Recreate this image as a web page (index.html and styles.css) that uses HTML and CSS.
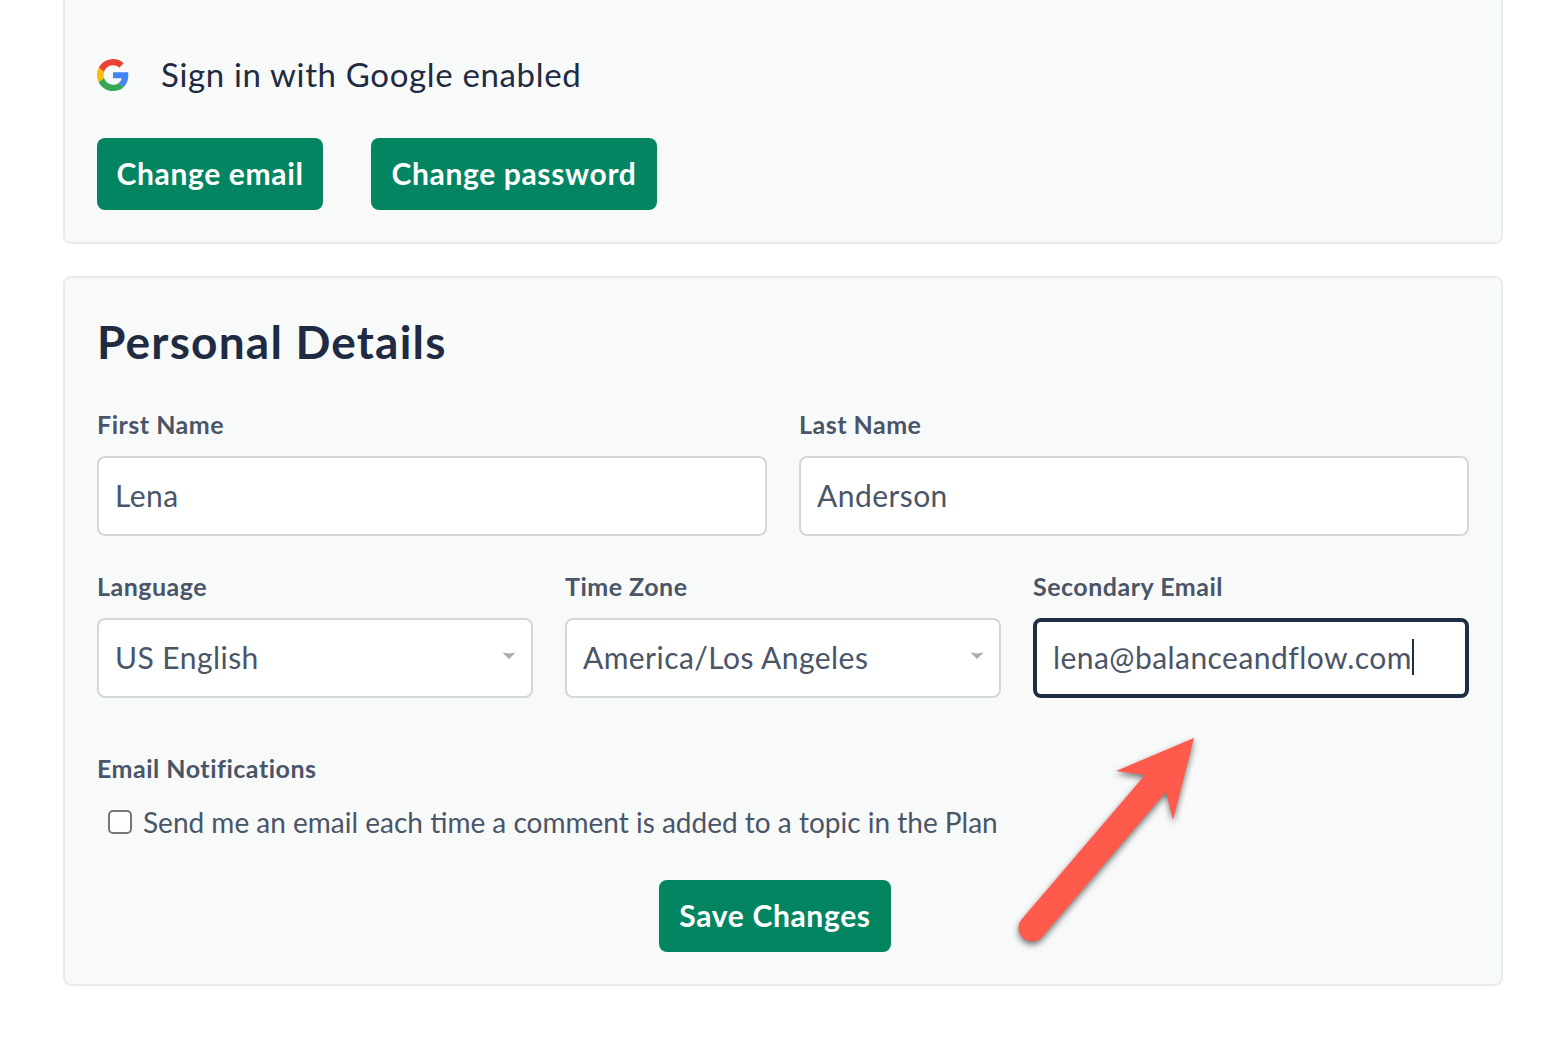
FILE: index.html
```html
<!DOCTYPE html>
<html lang="en">
<head>
<meta charset="utf-8">
<title>Account settings</title>
<link rel="stylesheet" href="styles.css">
</head>
<body>
<main class="page">
  <section class="card card-top">
    <div class="google-row">
      <svg class="google-icon" viewBox="0 0 48 48" aria-hidden="true">
        <path fill="#EA4335" d="M24 9.5c3.54 0 6.71 1.22 9.21 3.6l6.85-6.85C35.9 2.38 30.47 0 24 0 14.62 0 6.51 5.38 2.56 13.22l7.98 6.19C12.43 13.72 17.74 9.5 24 9.5z"/>
        <path fill="#4285F4" d="M46.98 24.55c0-1.57-.15-3.09-.38-4.55H24v9.02h12.94c-.58 2.96-2.26 5.48-4.78 7.18l7.73 6c4.51-4.18 7.09-10.36 7.09-17.65z"/>
        <path fill="#FBBC05" d="M10.53 28.59c-.48-1.45-.76-2.99-.76-4.59s.27-3.14.76-4.59l-7.98-6.19C.92 16.46 0 20.12 0 24c0 3.88.92 7.54 2.56 10.78l7.97-6.19z"/>
        <path fill="#34A853" d="M24 48c6.48 0 11.93-2.13 15.89-5.81l-7.73-6c-2.15 1.45-4.92 2.3-8.16 2.3-6.26 0-11.57-4.22-13.47-9.91l-7.98 6.19C6.51 42.62 14.62 48 24 48z"/>
      </svg>
      <span class="google-text">Sign in with Google enabled</span>
    </div>
    <div class="button-row">
      <button class="btn btn-email" type="button">Change email</button>
      <button class="btn btn-password" type="button">Change password</button>
    </div>
  </section>

  <section class="card card-details">
    <h2 class="title">Personal Details</h2>
    <div class="grid-two">
      <div class="field">
        <label class="label">First Name</label>
        <input class="control" type="text" value="Lena">
      </div>
      <div class="field">
        <label class="label">Last Name</label>
        <input class="control" type="text" value="Anderson">
      </div>
    </div>
    <div class="grid-three">
      <div class="field">
        <label class="label">Language</label>
        <div class="select-box">
          <span class="select-value">US English</span>
          <svg class="chevron" viewBox="0 0 14 8" aria-hidden="true"><path d="M0.5 0.5 7 1.5l6.5-1L7 7z"/></svg>
        </div>
      </div>
      <div class="field">
        <label class="label">Time Zone</label>
        <div class="select-box">
          <span class="select-value">America/Los Angeles</span>
          <svg class="chevron" viewBox="0 0 14 8" aria-hidden="true"><path d="M0.5 0.5 7 1.5l6.5-1L7 7z"/></svg>
        </div>
      </div>
      <div class="field">
        <label class="label">Secondary Email</label>
        <div class="focused-box"><span class="focused-value">lena@balanceandflow.com</span><span class="caret"></span></div>
      </div>
    </div>
    <div class="notify">
      <div class="label">Email Notifications</div>
      <label class="check-row">
        <input class="check" type="checkbox">
        <span class="check-text">Send me an email each time a comment is added to a topic in the Plan</span>
      </label>
    </div>
    <div class="save-row">
      <button class="btn btn-save" type="button">Save Changes</button>
    </div>
  </section>

  <svg class="arrow" viewBox="0 0 200 230" aria-hidden="true">
    <g fill="#ff5a4b" stroke="#ff5a4b">
      <path d="M32 208 155 64" fill="none" stroke-width="27" stroke-linecap="round"/>
      <path d="M194 18 116 51 145 55 166 72 173 100z" stroke-width="0"/>
    </g>
  </svg>
</main>
</body>
</html>
```

FILE: styles.css
```css
* { box-sizing: border-box; }

html, body {
  margin: 0;
  height: 1042px;
  overflow: hidden;
  background: #fff;
}

body {
  font-family: "Lato", "Noto Sans", sans-serif;
  color: #4a5568;
}

.page {
  position: relative;
  width: 1560px;
  height: 1042px;
  padding: 0 57px 0 63px;
}

.card {
  background: #f8fafa;
  border: 2px solid #e8ebec;
  border-radius: 8px;
  padding: 0 32px;
}

.card-top {
  height: 244px;
  border-top: 0;
  border-top-left-radius: 0;
  border-top-right-radius: 0;
  padding-top: 58px;
}

.google-row {
  display: flex;
  align-items: center;
  height: 34px;
  margin-bottom: 46px;
}

.google-icon {
  width: 32px;
  height: 32px;
  margin-right: 32px;
  flex: none;
}

.google-text {
  font-size: 33px;
  color: #1f2b43;
  letter-spacing: 0.65px;
  padding-bottom: 3px;
}

.button-row {
  display: flex;
  gap: 48px;
}

.btn {
  height: 72px;
  border: 0;
  border-radius: 8px;
  background: #048562;
  color: #fff;
  font-family: inherit;
  font-size: 30px;
  font-weight: 700;
  letter-spacing: 0.65px;
  padding: 0 0 2px;
  text-align: center;
}

.btn-email { width: 226px; }
.btn-password { width: 286px; }
.btn-save { width: 232px; }

.card-details {
  height: 710px;
  margin-top: 32px;
  padding-top: 37px;
}

.title {
  margin: 0 0 40px;
  font-size: 46px;
  line-height: 54px;
  font-weight: 700;
  color: #1f2b43;
  letter-spacing: 1.2px;
}

.grid-two {
  display: grid;
  grid-template-columns: 670px 670px;
  gap: 32px;
  margin-bottom: 35px;
}

.grid-three {
  display: grid;
  grid-template-columns: 436px 436px 436px;
  gap: 32px;
  margin-bottom: 55px;
}

.field {
  display: flex;
  flex-direction: column;
}

.label {
  display: block;
  font-size: 25px;
  line-height: 30px;
  font-weight: 700;
  color: #4a5568;
  margin-bottom: 17px;
  letter-spacing: 0.5px;
}

.control,
.select-box,
.focused-box {
  height: 80px;
  width: 100%;
  background: #fff;
  border: 2px solid #d3d6da;
  border-radius: 8px;
  font-family: inherit;
  font-size: 30px;
  color: #4a5568;
  letter-spacing: 0.45px;
}

.control {
  padding: 0 16px 2px;
  outline: 0;
}

.select-box {
  display: flex;
  align-items: center;
  justify-content: space-between;
  padding: 0 16px 2px;
}

.chevron {
  width: 14px;
  height: 8px;
  margin: 0 -1px 3px 0;
  fill: #a5adb3;
}

.focused-box {
  display: flex;
  align-items: center;
  border: 4px solid #1f2d45;
  padding: 0 16px 2px;
}

.caret {
  width: 2px;
  height: 36px;
  background: #1f2d45;
  flex: none;
}

.notify .label {
  margin-bottom: 23px;
}

.check-row {
  display: flex;
  align-items: center;
  height: 32px;
  padding-left: 11px;
}

.check {
  appearance: none;
  width: 24px;
  height: 24px;
  margin: 0 11px 0 0;
  background: #fff;
  border: 2px solid #767676;
  border-radius: 5px;
  flex: none;
}

.check-text {
  font-size: 28px;
  white-space: nowrap;
  color: #4a5568;
}

.save-row {
  display: flex;
  justify-content: center;
  margin-top: 42px;
  padding-right: 16px;
}

.arrow {
  position: absolute;
  left: 1000px;
  top: 720px;
  width: 200px;
  height: 230px;
  filter: drop-shadow(0 3px 3px rgba(0, 0, 0, 0.55));
}
```
